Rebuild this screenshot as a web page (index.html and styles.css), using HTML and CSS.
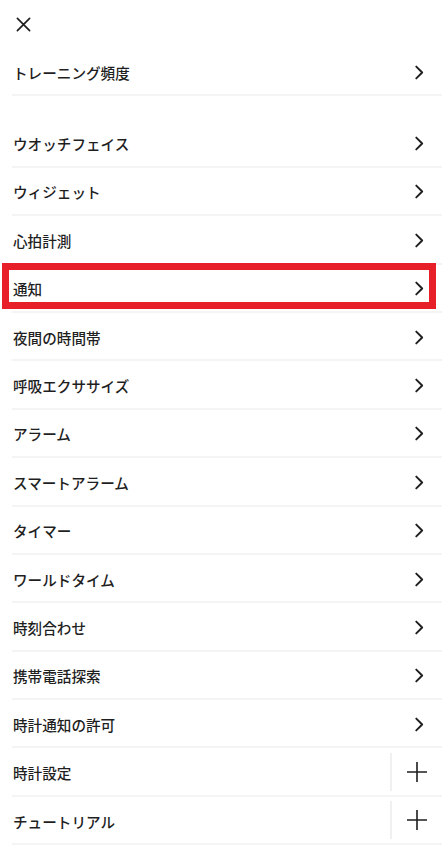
FILE: index.html
```html
<!DOCTYPE html>
<html lang="ja">
<head>
<meta charset="utf-8">
<link rel="stylesheet" href="styles.css">
</head>
<body>
<div class="screen">
  <header class="topbar">
    <button class="close" aria-label="閉じる">
      <svg width="16" height="16" viewBox="0 0 16 16"><path d="M1.5 1.5 L14.5 14.5 M14.5 1.5 L1.5 14.5" stroke="#1f1f1f" stroke-width="1.8" fill="none" stroke-linecap="round"/></svg>
    </button>
  </header>

  <ul class="group">
    <li class="row"><span class="label">トレーニング頻度</span><span class="act"><svg class="chev" viewBox="0 0 10 14"><path d="M2 1.5 L7.5 7 L2 12.5" /></svg></span></li>
  </ul>

  <ul class="group group-main">
    <li class="row"><span class="label">ウオッチフェイス</span><span class="act"><svg class="chev" viewBox="0 0 10 14"><path d="M2 1.5 L7.5 7 L2 12.5" /></svg></span></li>
    <li class="row"><span class="label">ウィジェット</span><span class="act"><svg class="chev" viewBox="0 0 10 14"><path d="M2 1.5 L7.5 7 L2 12.5" /></svg></span></li>
    <li class="row"><span class="label">心拍計測</span><span class="act"><svg class="chev" viewBox="0 0 10 14"><path d="M2 1.5 L7.5 7 L2 12.5" /></svg></span></li>
    <li class="row row-marked"><span class="label">通知</span><span class="act"><svg class="chev" viewBox="0 0 10 14"><path d="M2 1.5 L7.5 7 L2 12.5" /></svg></span></li>
    <li class="row"><span class="label">夜間の時間帯</span><span class="act"><svg class="chev" viewBox="0 0 10 14"><path d="M2 1.5 L7.5 7 L2 12.5" /></svg></span></li>
    <li class="row"><span class="label">呼吸エクササイズ</span><span class="act"><svg class="chev" viewBox="0 0 10 14"><path d="M2 1.5 L7.5 7 L2 12.5" /></svg></span></li>
    <li class="row"><span class="label">アラーム</span><span class="act"><svg class="chev" viewBox="0 0 10 14"><path d="M2 1.5 L7.5 7 L2 12.5" /></svg></span></li>
    <li class="row"><span class="label">スマートアラーム</span><span class="act"><svg class="chev" viewBox="0 0 10 14"><path d="M2 1.5 L7.5 7 L2 12.5" /></svg></span></li>
    <li class="row"><span class="label">タイマー</span><span class="act"><svg class="chev" viewBox="0 0 10 14"><path d="M2 1.5 L7.5 7 L2 12.5" /></svg></span></li>
    <li class="row"><span class="label">ワールドタイム</span><span class="act"><svg class="chev" viewBox="0 0 10 14"><path d="M2 1.5 L7.5 7 L2 12.5" /></svg></span></li>
    <li class="row"><span class="label">時刻合わせ</span><span class="act"><svg class="chev" viewBox="0 0 10 14"><path d="M2 1.5 L7.5 7 L2 12.5" /></svg></span></li>
    <li class="row"><span class="label">携帯電話探索</span><span class="act"><svg class="chev" viewBox="0 0 10 14"><path d="M2 1.5 L7.5 7 L2 12.5" /></svg></span></li>
    <li class="row"><span class="label">時計通知の許可</span><span class="act"><svg class="chev" viewBox="0 0 10 14"><path d="M2 1.5 L7.5 7 L2 12.5" /></svg></span></li>
    <li class="row"><span class="label">時計設定</span><span class="act act-plus"><svg class="plus" viewBox="0 0 20 20"><path d="M10 0 V20 M0 10 H20" /></svg></span></li>
    <li class="row"><span class="label">チュートリアル</span><span class="act act-plus"><svg class="plus" viewBox="0 0 20 20"><path d="M10 0 V20 M0 10 H20" /></svg></span></li>
  </ul>
</div>
</body>
</html>
```

FILE: styles.css
```css
* { box-sizing: border-box; }

html, body {
  margin: 0;
  padding: 0;
  background: #ffffff;
}

body {
  font-family: "Noto Sans CJK JP", "Noto Sans", sans-serif;
  color: #1f1f1f;
}

.screen {
  width: 442px;
  padding-left: 12px;
}

.topbar {
  height: 48px;
  display: flex;
  align-items: center;
}

.close {
  border: 0;
  background: none;
  padding: 0;
  margin: 0 0 0 2px;
  width: 18px;
  height: 18px;
  display: flex;
  align-items: center;
  justify-content: center;
}

.close svg {
  width: 15px;
  height: 15px;
}

.group {
  list-style: none;
  margin: 0;
  padding: 0;
}

.group-main {
  margin-top: 23px;
}

.row {
  height: 48.4px;
  display: flex;
  align-items: center;
  justify-content: space-between;
  border-bottom: 2px solid #f4f4f4;
  padding-top: 2px;
}

.row-marked {
  position: relative;
}

.row-marked::after {
  content: "";
  position: absolute;
  top: -1.5px;
  bottom: 2px;
  left: -10px;
  right: 6px;
  border: 7px solid #e61f28;
  pointer-events: none;
}

.label {
  font-size: 14.6px;
  font-weight: 500;
  letter-spacing: 0;
  padding-left: 1px;
}

.act {
  width: 40px;
  height: 100%;
  display: flex;
  align-items: center;
  justify-content: center;
  margin-right: 3px;
}

.chev {
  width: 11px;
  height: 15px;
  fill: none;
  stroke: #1f1f1f;
  stroke-width: 1.8;
  stroke-linecap: round;
  stroke-linejoin: round;
}

.act-plus {
  width: 52px;
  height: 38px;
  margin-right: 0;
  margin-top: -2px;
  border-left: 2px solid #f0f0f0;
}

.plus {
  width: 20px;
  height: 20px;
  fill: none;
  stroke: #1f1f1f;
  stroke-width: 1.6;
}
```
